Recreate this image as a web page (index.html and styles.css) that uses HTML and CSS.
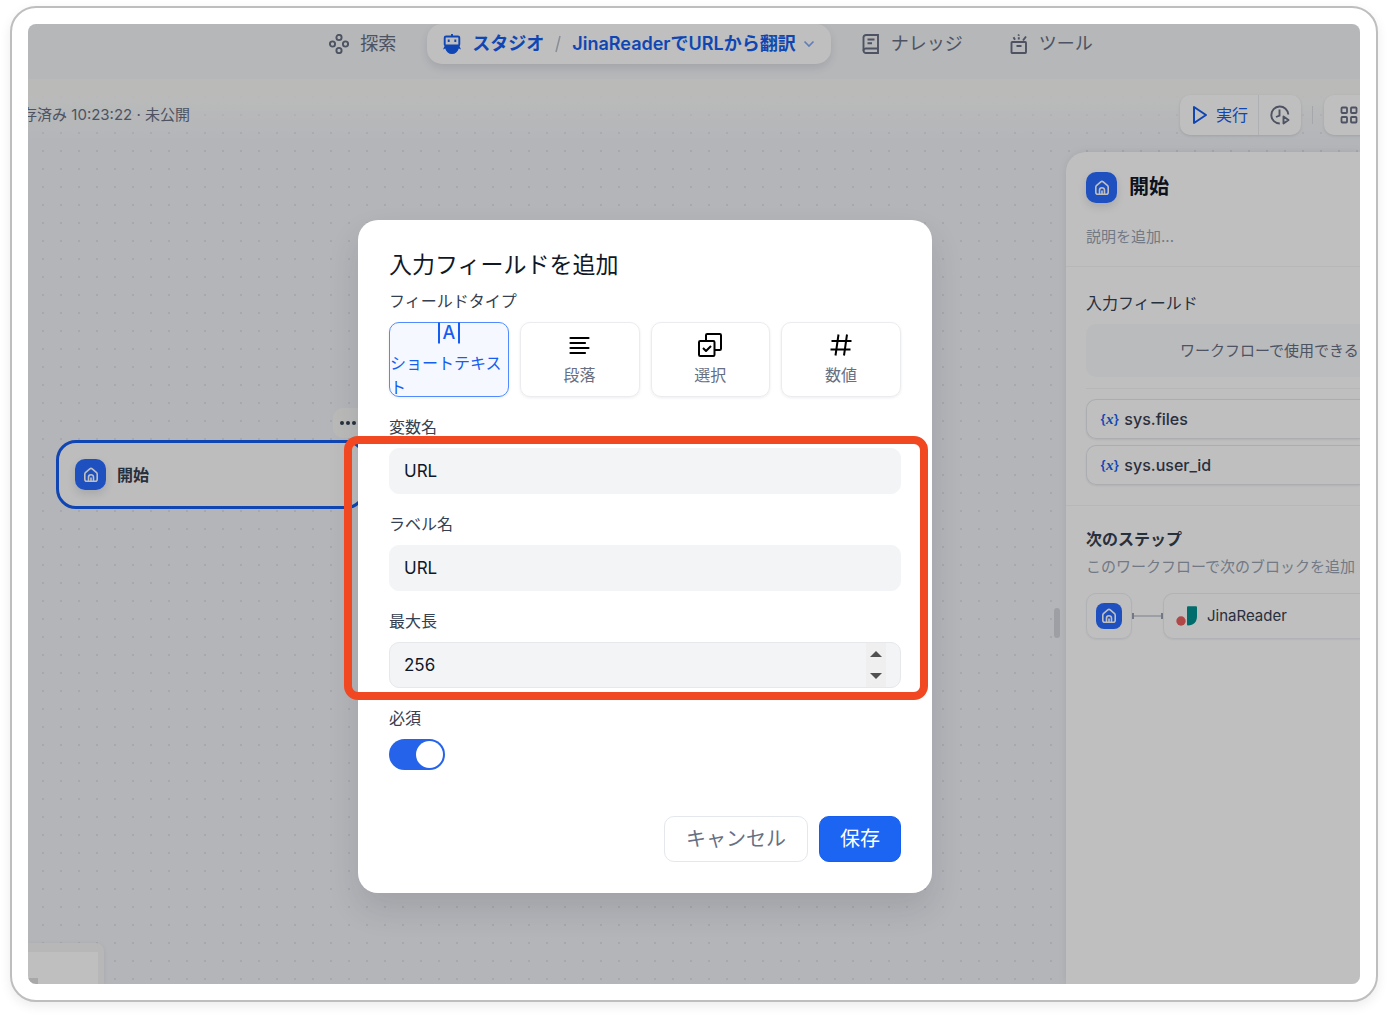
FILE: index.html
```html
<!DOCTYPE html>
<html lang="ja">

<head>
    <meta charset="UTF-8">
    <meta name="viewport" content="width=device-width, initial-scale=1.0">
    <title>JinaReaderでURLから翻訳</title>
    <link rel="stylesheet" href="styles.css">
</head>

<body>
    <!-- shared icon -->
    <svg class="sprite" width="0" height="0" aria-hidden="true">
        <symbol id="home" viewBox="0 0 16 16">
            <path d="M1.8 7.2c0-.8.3-1.3.9-1.8L6.8 1.900c.7-.6 1.7-.6 2.4 0l4.100 3.500c.6.5.9 1 .9 1.800v5c0 1.200-.8 2-2 2H3.800c-1.200 0-2-.8-2-2z" />
            <path d="M5.500 14V10.200a2.500 2.500 0 0 1 5 0V14M8 14v-3.500" />
        </symbol>
    </svg>

    <div class="frame">
        <div class="app">
            <nav class="main-nav">
                <a href="#" class="nav-link">
                    <svg width="20" height="20" viewBox="0 0 20 20" fill="none" stroke="currentColor" stroke-width="1.9">
                        <circle cx="10" cy="3.500" r="2.600" />
                        <circle cx="10" cy="16.500" r="2.600" />
                        <circle cx="3.500" cy="10" r="2.600" />
                        <circle cx="16.500" cy="10" r="2.600" />
                    </svg>
                    探索
                </a>
                <div class="nav-pill">
                    <a href="#" class="nav-active">
                        <svg width="18" height="20" viewBox="0 0 18 20" fill="none" stroke="currentColor" stroke-width="1.900">
                            <path d="M9 0v3" />
                            <rect x="1.700" y="2.500" width="14.600" height="9" rx="1.300" />
                            <path d="M5.700 5.500v2.600M12.300 5.500v2.600" />
                            <path d="M2 11h14l2 4.500-2.200-1C14.800 18 12.300 20 9 20s-5.800-2-6.800-5.500l-2.200 1z" fill="currentColor" stroke="none" />
                        </svg>
                        スタジオ
                    </a>
                    <svg class="slash" width="8" height="18" viewBox="0 0 8 18" fill="none" stroke="currentColor" stroke-width="1.500"><path d="M6 1L2 17" /></svg>
                    <button type="button" class="app-switch">
                        JinaReaderでURLから翻訳
                        <svg width="12" height="12" viewBox="0 0 12 12" fill="none" stroke="currentColor" stroke-width="1.700"><path d="M1.500 3.500L6 8l4.500-4.500" /></svg>
                    </button>
                </div>
                <a href="#" class="nav-link">
                    <svg width="18" height="20" viewBox="0 0 18 20" fill="none" stroke="currentColor" stroke-width="1.900">
                        <path d="M4 1h12v18H4a2.500 2.500 0 0 1-2.500-2.500v-13A2.500 2.500 0 0 1 4 1z" />
                        <path d="M16 14.500H4A2.300 2.300 0 0 0 1.500 16.800M5.500 5.500h7M5.500 9.200h4.500" />
                    </svg>
                    ナレッジ
                </a>
                <a href="#" class="nav-link">
                    <svg width="18" height="20" viewBox="0 0 18 20" fill="none" stroke="currentColor" stroke-width="1.900">
                        <rect x="1.500" y="8" width="14.500" height="11" rx=".8" />
                        <path d="M6.500 12h5M13 6.500l3-4M5 5.800L3.500 3.300M8.800 5.500V3.300M8.300 1.800L9 .5" />
                    </svg>
                    ツール
                </a>
            </nav>

            <div class="workspace">
                <div class="topbar">
                    <div class="save-state"><span>保存済み 10:23:22 · 未公開</span></div>
                    <div class="topbar-actions">
                        <div class="run-group">
                            <button type="button" class="run-btn">
                                <svg width="16" height="20" viewBox="0 0 16 20" fill="none" stroke="currentColor" stroke-width="2" stroke-linejoin="round"><path d="M2 2l12 8-12 8z" /></svg>
                                実行
                            </button>
                            <button type="button" class="history-btn" aria-label="実行履歴">
                                <svg width="20" height="20" viewBox="0 0 20 20" fill="none" stroke="currentColor" stroke-width="1.900">
                                    <path d="M9.800 18.500A8.500 8.500 0 1 1 18.300 9.500M9.500 4.500v6L6 12" />
                                    <path d="M13.500 11.500l5 3.500-5 3.500z" stroke-linejoin="round" />
                                </svg>
                            </button>
                        </div>
                        <span class="separator"></span>
                        <button type="button" class="feature-btn" aria-label="機能">
                            <svg width="18" height="18" viewBox="0 0 18 18" fill="none" stroke="currentColor" stroke-width="1.800">
                                <rect x="1.500" y="1.500" width="5.500" height="5.500" rx=".8" />
                                <rect x="11" y="1.500" width="5.500" height="5.500" rx=".8" />
                                <rect x="1.500" y="11" width="5.500" height="5.500" rx=".8" />
                                <rect x="11" y="11" width="5.500" height="5.500" rx=".8" />
                            </svg>
                        </button>
                    </div>
                </div>

                <div class="stage">
                    <div class="canvas">
                        <button type="button" class="node-more" aria-label="メニュー">
                            <svg width="18" height="6" viewBox="0 0 18 6" fill="currentColor"><circle cx="3" cy="3" r="2" /><circle cx="9" cy="3" r="2" /><circle cx="15" cy="3" r="2" /></svg>
                        </button>
                        <div class="node">
                            <span class="home-icon"><svg width="16" height="16"><use href="#home" /></svg></span>
                            開始
                        </div>
                        <div class="minimap"><div class="minimap-view"><span></span></div></div>
                    </div>

                    <aside class="panel">
                        <span class="resize-handle"></span>
                        <section class="panel-head">
                            <h2><span class="home-icon"><svg width="16" height="16"><use href="#home" /></svg></span>開始</h2>
                            <p class="hint">説明を追加...</p>
                        </section>
                        <section class="panel-fields">
                            <h3>入力フィールド</h3>
                            <p class="empty">ワークフローで使用できる</p>
                            <ul class="vars">
                                <li><span class="var-icon">{<i>x</i>}</span>sys.files</li>
                                <li><span class="var-icon">{<i>x</i>}</span>sys.user_id</li>
                            </ul>
                        </section>
                        <section class="panel-next">
                            <h3 class="strong">次のステップ</h3>
                            <p class="next-hint">このワークフローで次のブロックを追加</p>
                            <div class="steps">
                                <div class="step-start"><span class="home-icon small"><svg width="16" height="16"><use href="#home" /></svg></span></div>
                                <span class="connector"></span>
                                <div class="step-next">
                                    <svg width="22" height="22" viewBox="0 0 22 22">
                                        <circle cx="6" cy="16" r="4.700" fill="#eb6161" />
                                        <path d="M12 2.200q0-1 1-1h8q1 0 1 1V11c0 6-3.500 9.500-9 9.500q-1 0-1-1z" fill="#009191" />
                                    </svg>
                                    JinaReader
                                </div>
                            </div>
                        </section>
                    </aside>
                </div>
            </div>

            <div class="overlay">
                <form class="modal" role="dialog" aria-labelledby="modal-title">
                    <h1 id="modal-title">入力フィールドを追加</h1>
                    <div class="field">
                        <span class="label">フィールドタイプ</span>
                        <div class="types">
                            <button type="button" class="type selected">
                                <svg width="24" height="24" viewBox="0 0 24 24" fill="none" stroke="currentColor" stroke-width="2">
                                    <path d="M2 1.500v21M22 1.500v21" />
                                    <text x="12" y="18" text-anchor="middle" font-size="18" font-weight="500" fill="currentColor" stroke="none">A</text>
                                </svg>
                                <span>ショートテキスト</span>
                            </button>
                            <button type="button" class="type">
                                <svg width="24" height="24" viewBox="0 0 24 24" fill="none" stroke="#000" stroke-width="2.200" stroke-linecap="round"><path d="M2.500 5h18M2.500 10h14.500M2.500 15h18M2.500 20h14.500" /></svg>
                                <span>段落</span>
                            </button>
                            <button type="button" class="type">
                                <svg width="24" height="24" viewBox="0 0 24 24" fill="none" stroke="#000" stroke-width="2" stroke-linejoin="round">
                                    <rect x="1" y="8" width="15.500" height="15" rx="1.200" />
                                    <path d="M8 8V2.200Q8 1 9.200 1h12.600Q23 1 23 2.200v13.600q0 1.200-1.200 1.200h-5.300M5 15l3 3 5-5" />
                                </svg>
                                <span>選択</span>
                            </button>
                            <button type="button" class="type">
                                <svg width="24" height="24" viewBox="0 0 24 24" fill="none" stroke="#000" stroke-width="2"><path d="M9.500 1.500l-3 21M18 1.500l-3 21M2.500 8h20M1.500 16.500h20" /></svg>
                                <span>数値</span>
                            </button>
                        </div>
                    </div>
                    <div class="field">
                        <label class="label" for="variable">変数名</label>
                        <input type="text" id="variable" value="URL">
                    </div>
                    <div class="field">
                        <label class="label" for="label-name">ラベル名</label>
                        <input type="text" id="label-name" value="URL">
                    </div>
                    <div class="field">
                        <label class="label" for="max-length">最大長</label>
                        <div class="number">
                            <input type="number" id="max-length" value="256">
                            <div class="stepper">
                                <button type="button" aria-label="増やす"><svg width="12" height="6" viewBox="0 0 12 6"><path d="M0 6l6-6 6 6z" /></svg></button>
                                <button type="button" aria-label="減らす"><svg width="12" height="6" viewBox="0 0 12 6"><path d="M0 0l6 6 6-6z" /></svg></button>
                            </div>
                        </div>
                    </div>
                    <div class="field">
                        <label class="label" for="required">必須</label>
                        <input type="checkbox" role="switch" id="required" class="switch" checked>
                    </div>
                    <div class="actions">
                        <button type="button" class="btn">キャンセル</button>
                        <button type="button" class="btn primary">保存</button>
                    </div>
                    <div class="highlight"></div>
                </form>
            </div>
        </div>
    </div>
</body>

</html>
```
FILE: styles.css
```css
* {
    box-sizing: border-box;
}

body {
    margin: 0;
    padding: 6px 11px 14px 10px;
    min-height: 100vh;
    display: flex;
    background-color: #fff;
    font-family: Inter, "Noto Sans CJK JP", sans-serif;
    font-size: 16px;
    line-height: 24px;
    color: #354052;
}

h1, h2, h3, p, ul {
    margin: 0;
    padding: 0;
}

button, input {
    font-family: inherit;
    font-size: inherit;
    line-height: inherit;
    color: inherit;
}

button {
    padding: 0;
    border: none;
    background: none;
    cursor: pointer;
}

a {
    color: inherit;
    text-decoration: none;
}

svg {
    flex: none;
}

.sprite {
    position: absolute;
}

.frame {
    flex: 1;
    display: flex;
    min-width: 0;
    padding: 16px;
    border: 2px solid #bebebe;
    border-radius: 26px;
    background-color: #fff;
    box-shadow: 0 4px 12px rgba(0, 0, 0, 0.08);
}

.app {
    position: relative;
    flex: 1;
    display: flex;
    flex-direction: column;
    min-width: 0;
    overflow: hidden;
    border-radius: 8px;
    background-color: #f2f4f7;
}

/* navbar */
.main-nav {
    display: flex;
    justify-content: center;
    gap: 15px;
    padding: 0 0 15px 34px;
    font-size: 18px;
    line-height: 38px;
    color: #676f83;
    white-space: nowrap;
}

.nav-link {
    display: flex;
    align-items: center;
    gap: 11px;
    padding: 0 16px;
}

.nav-pill {
    display: flex;
    align-items: center;
    gap: 10px;
    height: 40px;
    padding: 0 16px;
    border-radius: 15px;
    background-color: #fff;
    box-shadow: 0 4px 8px rgba(16, 24, 40, 0.1);
    color: #155eef;
    font-weight: 600;
}

.nav-active,
.app-switch {
    display: flex;
    align-items: center;
    gap: 11px;
    font-weight: inherit;
}

.app-switch {
    gap: 7px;
}

.app-switch svg {
    color: #84a9f5;
}

.slash {
    color: #b8bec9;
}

/* workspace */
.workspace {
    flex: 1;
    display: flex;
    flex-direction: column;
    background-color: #f0f2f7;
    background-image: radial-gradient(circle, #dee0e6 1px, transparent 1px);
    background-size: 18px 18px;
    background-position: 6px 9px;
}

.topbar {
    display: flex;
    justify-content: space-between;
    padding: 16px 0 17px;
    background-image: linear-gradient(#f9faf7 15%, rgba(249, 250, 247, 0) 85%);
}

.save-state {
    display: flex;
    align-items: center;
    justify-content: flex-end;
    width: 162px;
    font-size: 15px;
    color: #676f83;
    white-space: nowrap;
}

.topbar-actions {
    display: flex;
    align-items: center;
    gap: 11px;
    width: 180px;
}

.run-group,
.feature-btn {
    flex: none;
    display: flex;
    height: 40px;
    border-radius: 10px;
    background-color: #fff;
    box-shadow: 0 1px 3px rgba(16, 24, 40, 0.12);
    color: #676f83;
}

.run-btn {
    display: flex;
    align-items: center;
    gap: 8px;
    padding: 0 10px 0 12px;
    border-right: 1px solid #e9ebf0;
    color: #155eef;
}

.history-btn {
    display: flex;
    align-items: center;
    padding: 0 11px;
}

.separator {
    flex: none;
    width: 1px;
    height: 18px;
    background-color: #dcdfe5;
}

.feature-btn {
    width: 120px;
    align-items: center;
    padding-left: 16px;
}

.stage {
    flex: 1;
    display: flex;
}

.canvas {
    position: relative;
    flex: 1;
}

.node {
    position: absolute;
    top: 288px;
    left: 28px;
    display: flex;
    align-items: center;
    gap: 11px;
    width: 310px;
    height: 69px;
    padding: 0 16px;
    border: 3px solid #155eef;
    border-radius: 20px;
    background-color: #fcfcfd;
    font-weight: 700;
}

.node-more {
    position: absolute;
    top: 256px;
    left: 305px;
    display: flex;
    align-items: center;
    width: 44px;
    height: 30px;
    padding-left: 6px;
    border-radius: 10px;
    background-color: #f9faf7;
}

.minimap {
    position: absolute;
    bottom: 0;
    left: 0;
    width: 76px;
    height: 41px;
    padding: 9px 6px 0 0;
    border-radius: 0 8px 0 0;
    background-color: #f4f4f4;
    box-shadow: 0 1px 5px rgba(16, 24, 40, 0.08);
}

.minimap-view {
    display: flex;
    align-items: flex-end;
    height: 100%;
    background-color: #fff;
}

.minimap-view span {
    width: 10px;
    height: 6px;
    background-color: #e0e0e0;
}

.home-icon {
    flex: none;
    display: flex;
    align-items: center;
    justify-content: center;
    width: 31px;
    height: 31px;
    border-radius: 10px;
    background-color: #296dff;
    box-shadow: 0 4px 8px rgba(16, 24, 40, 0.12);
    fill: none;
    stroke: #fff;
    stroke-width: 1.6;
}

.home-icon.small {
    width: 26px;
    height: 26px;
    border-radius: 8px;
    box-shadow: none;
}

/* side panel */
.panel {
    position: relative;
    width: 294px;
    border-radius: 20px 0 0 0;
    background-color: #fff;
    box-shadow: 0 0 8px rgba(16, 24, 40, 0.08);
    white-space: nowrap;
}

.resize-handle {
    position: absolute;
    top: 456px;
    left: -12px;
    width: 6px;
    height: 30px;
    border-radius: 3px;
    background-color: #d2d5db;
}

.panel section {
    padding-left: 20px;
}

.panel section + section {
    border-top: 1px solid #f2f4f7;
}

.panel .panel-head {
    height: 114px;
    padding-top: 20px;
}

.panel h2 {
    display: flex;
    align-items: center;
    gap: 12px;
    font-size: 20px;
    line-height: 31px;
    color: #101828;
}

.panel h3 {
    font-size: 16px;
    font-weight: 400;
    line-height: 26px;
}

.panel h3.strong {
    font-weight: 700;
}

.hint {
    margin-top: 22px;
    font-size: 15px;
    line-height: 24px;
    color: #98a2b2;
}

.panel .panel-fields {
    padding-top: 23px;
    padding-bottom: 20px;
}

.empty {
    margin-top: 8px;
    padding-left: 94px;
    border-radius: 10px 0 0 10px;
    background-color: #f9fafb;
    font-size: 15px;
    line-height: 53px;
    color: #676f83;
}

.vars {
    display: grid;
    gap: 6px;
    margin-top: 11px;
    padding-top: 10px;
    border-top: 1px solid #f2f4f7;
    list-style: none;
}

.vars li {
    display: flex;
    align-items: center;
    gap: 5px;
    height: 40px;
    padding-left: 13px;
    border: 1px solid #e4e7ec;
    border-right: none;
    border-radius: 10px 0 0 10px;
    box-shadow: 0 1px 2px rgba(16, 24, 40, 0.08);
    font-weight: 500;
}

.var-icon {
    font-size: 13px;
    font-weight: 600;
    color: #155eef;
}

.var-icon i {
    font-family: "Liberation Serif", serif;
    font-size: 15px;
}

.panel .panel-next {
    padding-top: 20px;
}

.next-hint {
    margin-top: 3px;
    font-size: 15px;
    line-height: 24px;
    color: #98a2b2;
}

.steps {
    display: flex;
    align-items: center;
    margin-top: 14px;
}

.step-start,
.step-next {
    display: flex;
    align-items: center;
    justify-content: center;
    height: 46px;
    border: 1px solid #eceef2;
    border-radius: 10px;
    box-shadow: 0 1px 2px rgba(16, 24, 40, 0.06);
}

.step-start {
    width: 46px;
}

.step-next {
    flex: 1;
    justify-content: flex-start;
    gap: 10px;
    padding-left: 11px;
    border-right: none;
    border-radius: 10px 0 0 10px;
    font-size: 15px;
}

.connector {
    width: 31px;
    height: 6px;
    border: solid #98a2b2;
    border-width: 0 2px;
    background: linear-gradient(#d0d5dc, #d0d5dc) center / 100% 2px no-repeat;
}

/* dialog */
.overlay {
    position: absolute;
    inset: 0;
    display: flex;
    align-items: center;
    justify-content: center;
    padding: 105px 98px 0 0;
    background-color: rgba(0, 0, 0, 0.25);
}

.modal {
    position: relative;
    width: 574px;
    padding: 31px;
    border-radius: 20px;
    background-color: #fff;
    box-shadow: 0 16px 32px rgba(16, 24, 40, 0.12);
}

.modal h1 {
    margin-bottom: 9px;
    font-size: 23px;
    font-weight: 400;
    line-height: 28px;
    color: #101828;
}

.field + .field {
    margin-top: 17px;
}

.label {
    display: block;
    margin-bottom: 8px;
    line-height: 26px;
}

.types {
    display: grid;
    grid-template-columns: repeat(4, 1fr);
    gap: 11px;
}

.type {
    display: flex;
    flex-direction: column;
    align-items: center;
    justify-content: center;
    gap: 6px;
    height: 75px;
    border: 1px solid #eaecf0;
    border-radius: 10px;
    box-shadow: 0 1px 3px rgba(16, 24, 40, 0.08);
    line-height: 24px;
    color: #676f83;
    text-align: left;
}

.type.selected {
    border-color: #528bff;
    background-color: #f5f8ff;
    color: #155eef;
}

input[type="text"],
input[type="number"] {
    display: block;
    width: 100%;
    height: 46px;
    padding: 0 14px;
    border: 1px solid #f2f4f7;
    border-radius: 10px;
    background-color: #f3f4f6;
    font-size: 17px;
    color: #101828;
    appearance: textfield;
}

input[type="number"] {
    border-color: #e6e8ec;
}

.number {
    position: relative;
}

.stepper {
    position: absolute;
    top: 1px;
    right: 15px;
    bottom: 1px;
    display: flex;
    flex-direction: column;
    width: 20px;
    background-color: #efefef;
    fill: #505050;
}

.stepper button {
    flex: 1;
    display: flex;
    align-items: center;
    justify-content: center;
}

.switch {
    display: block;
    width: 56px;
    height: 31px;
    margin: 0;
    padding: 2px;
    border-radius: 16px;
    background-color: #2563eb;
    appearance: none;
}

.switch::before {
    content: "";
    display: block;
    width: 27px;
    height: 27px;
    border-radius: 50%;
    background-color: #fff;
}

.switch:checked::before {
    margin-left: auto;
}

.actions {
    display: flex;
    justify-content: flex-end;
    gap: 11px;
    margin-top: 46px;
}

.btn {
    height: 46px;
    padding: 0 21px;
    border: 1px solid #e4e7ec;
    border-radius: 10px;
    font-size: 20px;
    color: #676f83;
}

.btn.primary {
    padding: 0 20px;
    border-color: #155eef;
    background-color: #1c64f2;
    color: #fff;
}

.highlight {
    position: absolute;
    top: 216px;
    right: 4px;
    left: -14px;
    height: 264px;
    border: 8px solid #f24822;
    border-radius: 14px;
    pointer-events: none;
}
```
